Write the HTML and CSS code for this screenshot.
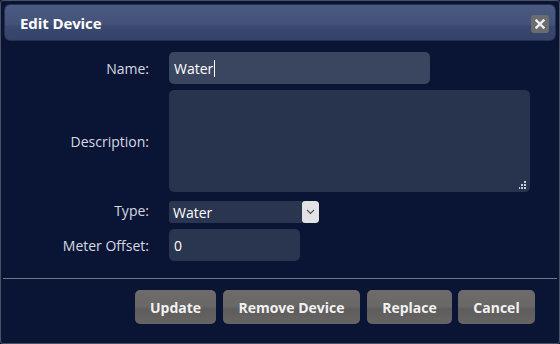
FILE: index.html
```html
<!DOCTYPE html>
<html>
<head>
<meta charset="utf-8">
<link rel="stylesheet" href="styles.css">
</head>
<body>
<div class="dialog">
  <div class="titlebar">
    <span class="title">Edit Device</span>
    <span class="close"><svg width="10" height="10" viewBox="0 0 10 10"><path d="M1.5 1.5 L8.5 8.5 M8.5 1.5 L1.5 8.5" stroke="#eeeeee" stroke-width="2.4" stroke-linecap="square"/></svg></span>
  </div>
  <div class="form">
    <label class="lbl">Name:</label>
    <div class="field"><div class="input name focused">Water<span class="caret"></span></div></div>
    <label class="lbl">Description:</label>
    <div class="field"><div class="textarea"><svg class="grip" width="8" height="8" viewBox="0 0 8 8"><rect x="5" y="0" width="2" height="2" fill="#c8ccd8"/><rect x="2" y="3" width="2" height="2" fill="#c8ccd8"/><rect x="5" y="3" width="2" height="2" fill="#c8ccd8"/><rect x="-1" y="6" width="2" height="2" fill="#c8ccd8"/><rect x="2" y="6" width="2" height="2" fill="#c8ccd8"/><rect x="5" y="6" width="2" height="2" fill="#c8ccd8"/></svg></div></div>
    <label class="lbl">Type:</label>
    <div class="field"><div class="select"><span class="sel-text">Water</span><span class="sel-arrow"><svg width="9" height="6" viewBox="0 0 9 6"><path d="M1 1 L4.5 4.5 L8 1" stroke="#555" stroke-width="1.2" fill="none"/></svg></span></div></div>
    <label class="lbl">Meter Offset:</label>
    <div class="field"><div class="input offset">0</div></div>
  </div>
  <div class="sep"></div>
  <div class="buttons">
    <button class="btn btn-update">Update</button>
    <button class="btn btn-remove">Remove Device</button>
    <button class="btn btn-replace">Replace</button>
    <button class="btn btn-cancel">Cancel</button>
  </div>
</div>
</body>
</html>
```
FILE: styles.css
```css
html, body {
  margin: 0;
  padding: 0;
  background: #0b1535;
}
body {
  width: 560px;
  height: 344px;
  font-family: "Open Sans", "Noto Sans", sans-serif;
  color: #e8eaf0;
}
.dialog {
  box-sizing: border-box;
  width: 560px;
  height: 344px;
  border: 1px solid #4b5062;
  border-radius: 3px;
  background: #0a1535;
  padding: 3px 3px 0 3px;
}
.titlebar {
  height: 37px;
  box-sizing: border-box;
  border: 1px solid #27304a;
  border-radius: 6px;
  background: linear-gradient(#4b5a81 0%, #44527a 55%, #3a4870 62%, #35426a 100%);
  display: flex;
  align-items: center;
  justify-content: space-between;
  padding: 0 6px 0 15px;
}
.title {
  font-weight: bold;
  font-size: 15px;
  color: #ffffff;
  letter-spacing: -0.1px;
}
.close {
  width: 18px;
  height: 18px;
  border-radius: 3px;
  background: #6b6c6f;
  display: flex;
  align-items: center;
  justify-content: center;
  margin-top: 2px;
}
.form {
  display: grid;
  grid-template-columns: 145px 1fr;
  column-gap: 20px;
  row-gap: 6px;
  align-items: center;
  padding-top: 11px;
}
.lbl {
  text-align: right;
  font-size: 14px;
  color: #d6d9e2;
}
.field {
  display: flex;
}
.input {
  height: 32px;
  box-sizing: border-box;
  border-radius: 5px;
  background: #2a364f;
  font-size: 14px;
  color: #ffffff;
  padding: 0 5px;
  display: flex;
  align-items: center;
}
.input.name {
  width: 261px;
  background: #3a4660;
}
.caret {
  display: inline-block;
  width: 1px;
  height: 17px;
  background: #ffffff;
  margin-left: 1px;
}
.input.offset {
  width: 131px;
}
.textarea {
  width: 361px;
  height: 102px;
  border-radius: 5px;
  background: #28344e;
  position: relative;
}
.grip {
  position: absolute;
  right: 3px;
  bottom: 3px;
}
.select {
  margin: 3px 0 0 0;
  width: 150px;
  height: 22px;
  display: flex;
  border-radius: 3px;
  overflow: hidden;
}
.sel-text {
  flex: 1;
  background: #2a364f;
  font-size: 14px;
  color: #ffffff;
  padding-left: 4px;
  display: flex;
  align-items: center;
}
.sel-arrow {
  width: 17px;
  background: #e3e3e6;
  border-radius: 3px;
  display: flex;
  align-items: center;
  justify-content: center;
}
.sep {
  height: 1px;
  background: #6f7688;
  margin: 17px -1px 0 -1px;
}
.buttons {
  display: flex;
  justify-content: flex-end;
  gap: 7px;
  padding: 11px 21px 0 0;
}
.btn {
  height: 34px;
  box-sizing: border-box;
  border: none;
  border-radius: 5px;
  background: linear-gradient(#6e6c6a 0%, #6a6866 48%, #5f5d5c 56%, #676563 100%);
  color: #f2f2f2;
  font-family: "Open Sans", "Noto Sans", sans-serif;
  font-weight: bold;
  font-size: 14px;
  padding: 0;
}
.btn-update { width: 81px; }
.btn-remove { width: 137px; }
.btn-replace { width: 85px; }
.btn-cancel { width: 77px; margin-left: -1px; }
```
